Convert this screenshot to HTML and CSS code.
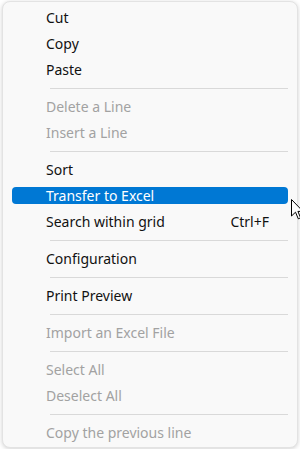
FILE: index.html
```html
<!DOCTYPE html>
<html>
<head>
<meta charset="utf-8">
<link rel="stylesheet" href="styles.css">
</head>
<body>
<div class="menu">
  <div class="item">Cut</div>
  <div class="item">Copy</div>
  <div class="item">Paste</div>
  <div class="sep"></div>
  <div class="item disabled">Delete a Line</div>
  <div class="item disabled">Insert a Line</div>
  <div class="sep"></div>
  <div class="item">Sort</div>
  <div class="item active">Transfer to Excel</div>
  <div class="item"><span>Search within grid</span><span class="key">Ctrl+F</span></div>
  <div class="sep"></div>
  <div class="item">Configuration</div>
  <div class="sep"></div>
  <div class="item">Print Preview</div>
  <div class="sep"></div>
  <div class="item disabled">Import an Excel File</div>
  <div class="sep"></div>
  <div class="item disabled">Select All</div>
  <div class="item disabled">Deselect All</div>
  <div class="sep"></div>
  <div class="item disabled">Copy the previous line</div>
</div>
<svg class="cursor" width="13" height="21" viewBox="0 0 13 21">
  <path d="M0.5 0.5 L0.5 17 L4.5 13.2 L7.3 19.8 L9.6 18.8 L6.9 12.4 L12 12.4 Z" fill="#fff" stroke="#000" stroke-width="1" stroke-linejoin="miter"/>
</svg>
</body>
</html>
```
FILE: styles.css
```css
html, body {
  margin: 0;
  padding: 0;
  background: #ffffff;
}
body {
  width: 300px;
  height: 449px;
  overflow: hidden;
  position: relative;
  font-family: "Noto Sans", "Open Sans", sans-serif;
  font-size: 14px;
}
.menu {
  margin: 1px 0 0 2px;
  width: 294px;
  background: #f9f9f9;
  border: 1px solid #e3e3e3;
  border-radius: 8px;
  box-shadow: 0 1px 4px rgba(0,0,0,0.18);
  padding: 3px 0 1px;
  display: flex;
  flex-direction: column;
}
.item {
  height: 26px;
  margin: 0 9px 0 9px;
  padding: 0 19px 0 34px;
  display: flex;
  align-items: center;
  justify-content: space-between;
  color: #111;
  border-radius: 4px;
  line-height: 1;
}
.item.disabled {
  color: #a2a2a2;
}
.item.active {
  background: #0078d4;
  color: #fff;
  height: 17px;
  margin-top: 4px;
  margin-bottom: 5px;
}
.sep {
  height: 11px;
  display: flex;
  align-items: center;
  padding: 0 9px 0 47px;
}
.sep::before {
  content: "";
  flex: 1;
  height: 1px;
  background: #d9d9d9;
}
.cursor {
  position: absolute;
  left: 291px;
  top: 199px;
}
```
